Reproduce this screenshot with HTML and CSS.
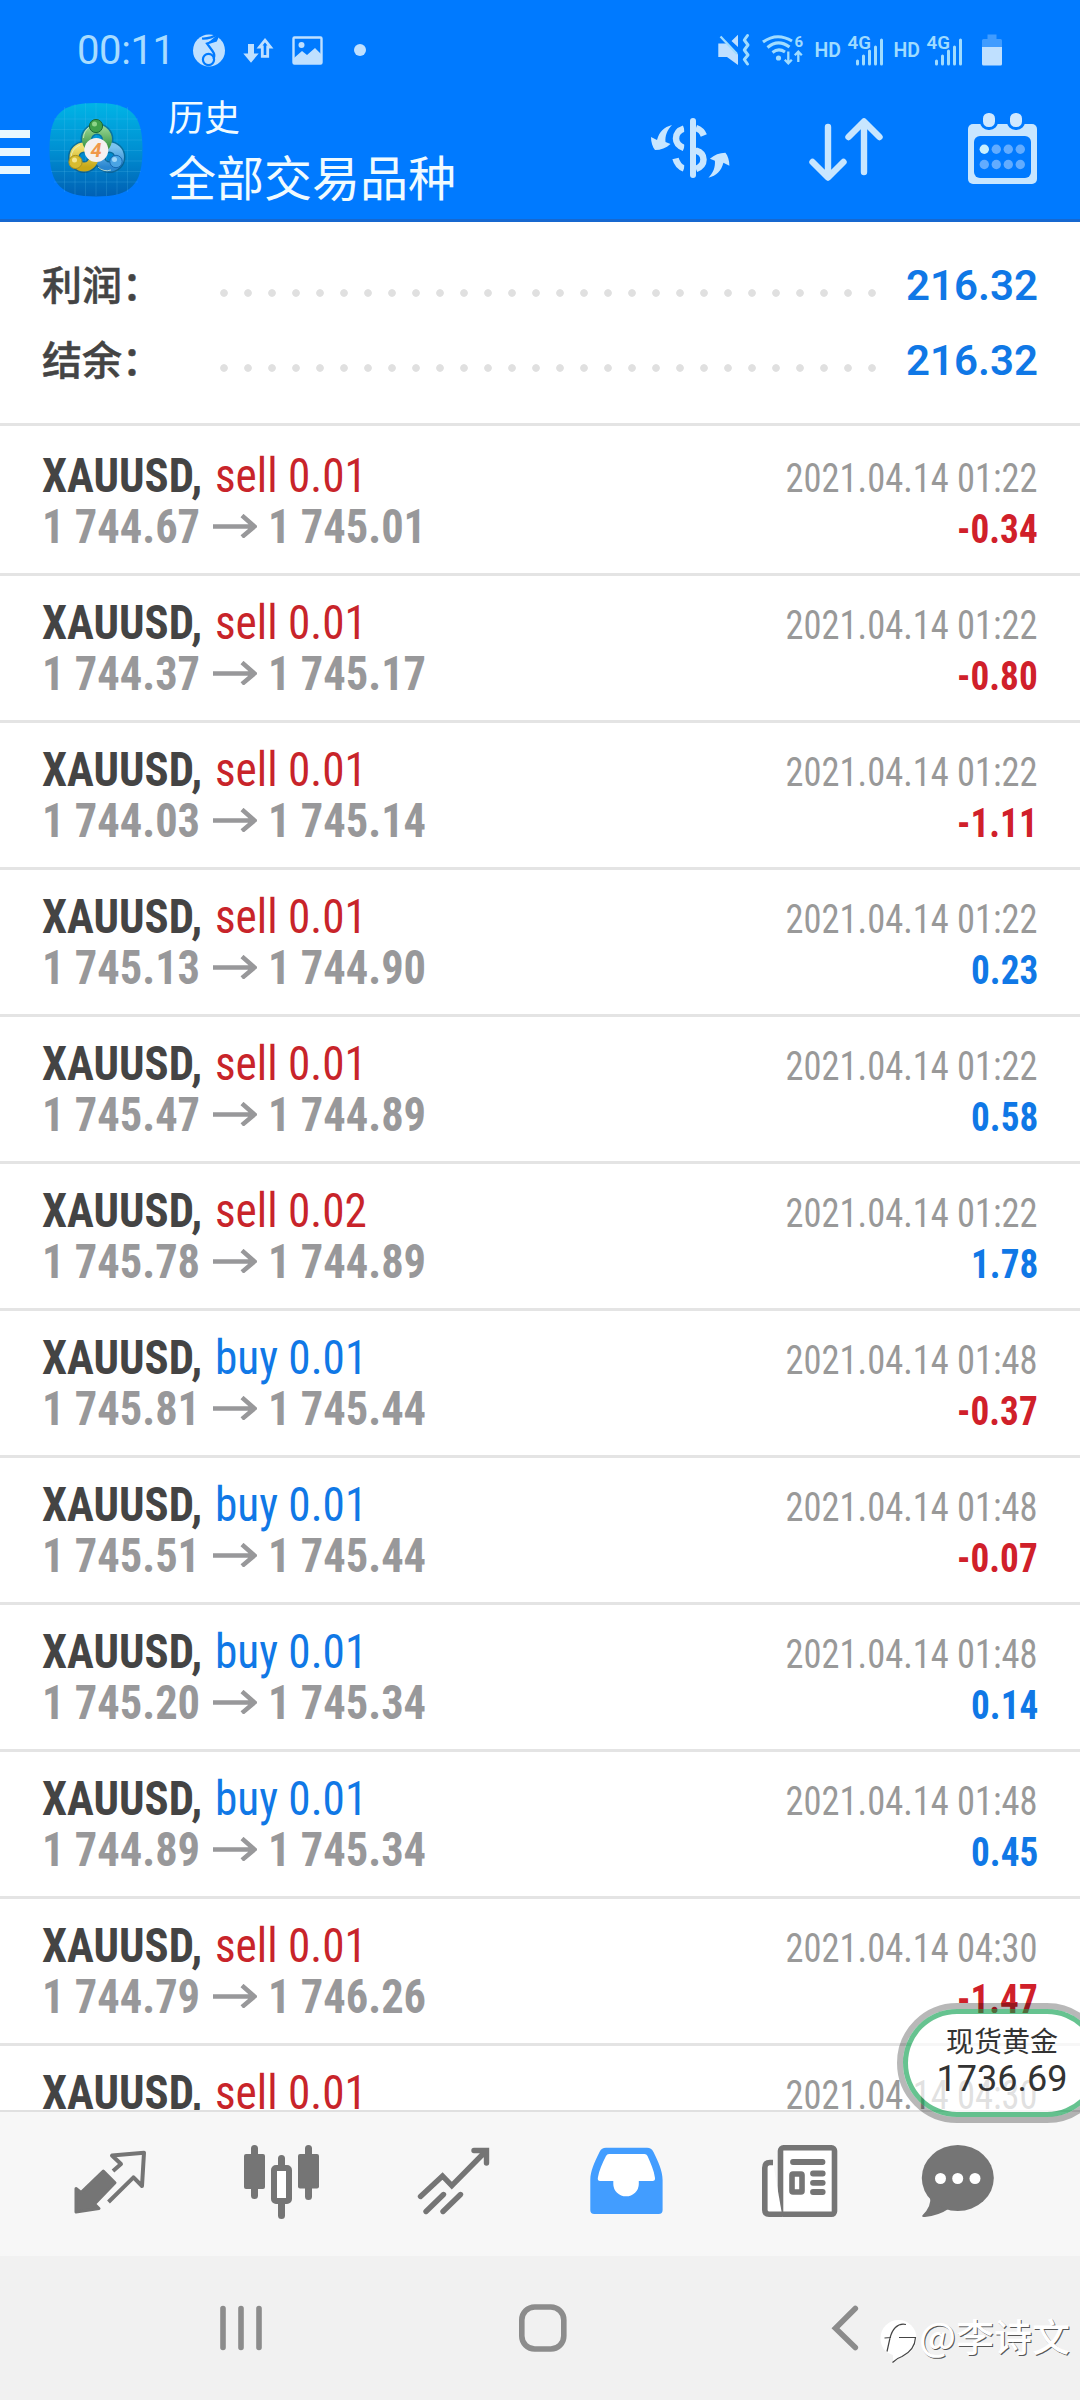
FILE: index.html
```html
<!DOCTYPE html>
<html lang="zh-CN">
<head>
<meta charset="utf-8">
<title>历史</title>
<link rel="stylesheet" href="styles.css">
</head>
<body>
<header class="header">
  <div class="status">
    <span class="clock">00:11</span>
    <svg class="status-left" viewBox="185 19 190 60" width="190" height="60">
      <circle cx="209" cy="49.5" r="16" class="pale"/>
      <path d="M202 37.500Q210 38 219 32.500L216 39.500 207 42.500 212.500 50Q215.500 54 213.500 58" class="note"/>
      <path d="M219 32.500L216 39.500 207 42.500z" class="blue"/>
      <circle cx="208.500" cy="58.500" r="5.600" class="note"/>
      <path d="M248 43h6v9.500h4.700L251 61.700 243.300 52.500H248z" class="pale"/>
      <path d="M265 39.200L270.500 46H267.700V55.400H262.300V46H259.500z" class="up-arrow"/>
      <rect x="293.5" y="36.5" width="28" height="26" rx="1" class="photo-frame"/>
      <circle cx="301.5" cy="44" r="3" class="pale"/>
      <path d="M294 57l8-7 5 4 8-7 6 6v9h-27z" class="pale"/>
      <circle cx="360" cy="49" r="6" class="pale"/>
    </svg>
    <svg class="status-right" viewBox="710 19 310 60" width="310" height="60">
      <path d="M718.3 42.5H727L738 53.5V64L727 56H718.3zM731.5 40L738 33.8V46z" class="pale"/>
      <path d="M720.5 35.5L737 53" class="thin"/>
      <path d="M747.5 34.5L744.3 39 748 44 744.3 49 748 54 744.3 58.5 747.5 63" class="squiggle"/>
      <path d="M763 41Q777 31 792 40M767.5 46.5Q778 37.5 789.5 46M772.5 51.5Q778.5 46.5 785 51" class="wave"/>
      <circle cx="778.5" cy="57" r="2.6" class="cyan"/>
      <path d="M788.3 50.5V62M784.8 58.7l3.5 3.6 3.5-3.6M798.3 61V50.5M794.8 54.2l3.5-3.6 3.5 3.6" class="thin"/>
      <text x="794.5" y="46" class="s-six">6</text>
      <text x="814.500" y="56" class="s-hd" textLength="26.500" lengthAdjust="spacingAndGlyphs">HD</text>
      <text x="847.5" y="48" class="s-4g" textLength="23.500" lengthAdjust="spacingAndGlyphs">4G</text>
      <path d="M857.5 60v3M863.5 55v8M869.5 50v13M875.5 46v17M881.5 39v24" class="bars"/>
      <text x="893.500" y="56" class="s-hd" textLength="26.500" lengthAdjust="spacingAndGlyphs">HD</text>
      <text x="926.5" y="48" class="s-4g" textLength="23.500" lengthAdjust="spacingAndGlyphs">4G</text>
      <path d="M936.5 60v3M942.5 55v8M948.5 50v13M954.5 46v17M960.5 39v24" class="bars"/>
      <path d="M987.5 33.5h9v4.500h4a1.500 1.500 0 0 1 1.500 1.500V46.500H982V39.500a1.500 1.500 0 0 1 1.500-1.500h4z" class="battery-top"/>
      <path d="M982 46h20v17a1.500 1.500 0 0 1-1.500 1.500h-17a1.500 1.500 0 0 1-1.500-1.500z" class="pale"/>
    </svg>
  </div>
  <div class="toolbar">
    <svg viewBox="0 90 36 120" width="36" height="120"><path d="M0 130h30v8H0zM0 148h30v8H0zM0 166h30v8H0z" class="menu-bars"/></svg>
    <svg viewBox="36 90 132 120" width="132" height="120">
      <defs>
        <linearGradient id="sky" x1="0" y1="0" x2="0" y2="1"><stop offset="0" stop-color="#00b4e6"/><stop offset=".5" stop-color="#0090d2"/><stop offset="1" stop-color="#0060b4"/></linearGradient>
        <linearGradient id="green" x1="0" y1="0" x2="0" y2="1"><stop offset="0" stop-color="#8fd08a"/><stop offset="1" stop-color="#2d8c3c"/></linearGradient>
        <linearGradient id="gold" x1="0" y1="0" x2="0" y2="1"><stop offset="0" stop-color="#f0e070"/><stop offset="1" stop-color="#c8a818"/></linearGradient>
        <linearGradient id="azure" x1="0" y1="0" x2="0" y2="1"><stop offset="0" stop-color="#7cc4f0"/><stop offset="1" stop-color="#2a86d0"/></linearGradient>
      </defs>
      <path d="M96 103C131 103 142.500 114 142.500 149.500S131 196.500 96 196.500 49.500 185 49.500 149.500 61 103 96 103z" fill="url(#sky)"/>
      <path d="M64.500 107v85M75 104v91M85.500 103v93M96 103v93M106.500 103v93M117 104v91M127.500 107v85M54 119h84M51 129.500h90M50 140h92M50 150.500h92M50 161h92M51 171.500h90M54 182h84" class="grid"/>
      <g fill="none" stroke="#123c50" stroke-width="12" opacity=".4"><circle cx="97" cy="139.500" r="10.500"/><circle cx="84" cy="157" r="10"/><circle cx="109.500" cy="157" r="10"/></g>
      <g fill="none" stroke-width="9"><circle cx="109.500" cy="157" r="10" stroke="url(#azure)"/><circle cx="84" cy="157" r="10" stroke="url(#gold)"/><circle cx="97" cy="139.500" r="10.500" stroke="url(#green)"/></g>
      <g fill="none" stroke="#e6f6d8" stroke-width="1" opacity=".7"><path d="M83.500 138a13.500 13.500 0 0 1 6-11M71 158a13.500 13.500 0 0 1 9-13M98 167a13 13 0 0 0 13 3"/></g>
      <circle cx="96" cy="126" r="6.600" fill="#3fa04a" stroke="#1d6a35"/><circle cx="94.500" cy="124" r="2.500" fill="#8ed488"/>
      <circle cx="75.500" cy="162" r="6.600" fill="#d8bc30" stroke="#a89020"/><circle cx="74.500" cy="160" r="2.500" fill="#f4e690"/>
      <circle cx="116" cy="161.500" r="6.200" fill="#4aa4e4" stroke="#1868b0"/><circle cx="114.500" cy="159.500" r="2.500" fill="#a0d6f8"/>
      <circle cx="96.300" cy="150" r="12" fill="#f4f0f0"/>
      <text x="96" y="157" class="logo-4">4</text>
    </svg>
    <div class="titles"><div class="title-small">历史</div><div class="title-big">全部交易品种</div></div>
    <svg class="tool tool-first" viewBox="645 90 155 120" width="155" height="120">
      <path d="M684 128.500C678 130.500 676 134 676 138.500S679 146 684 148M696 128C700.500 129.500 702.500 132 703.800 135.500M696 150.500C701 152 703.500 155 703.500 159.500S701 167 696 169M675.500 158.500C677 164 680 167 684 168.500" class="dollar"/>
      <path d="M690 145L699 149V155L690 152z" class="ice"/>
      <path d="M684.200 123h5.500v53h-5.500z" class="dollar-gap"/>
      <path d="M693 121V175" class="dollar-bar"/>
      <path d="M672 125C664 127 659 132 657 140L651 137C651 142 652.500 147 655 150C661 150 666 148 670.500 144L665.500 142C665 136 667 130 672 125z" class="ice"/>
      <path d="M672 125C664 127 659 132 657 140L651 137C651 142 652.500 147 655 150C661 150 666 148 670.500 144L665.500 142C665 136 667 130 672 125z" transform="rotate(180 690.200 151.400)" class="ice"/>
    </svg>
    <svg class="tool" viewBox="800 90 160 120" width="160" height="120"><path d="M828 127V177M812.500 162L828 177.500 843.500 162M864 172V122M848.500 137L864 121.500 879.500 137" class="sort"/></svg>
    <svg class="tool" viewBox="960 90 120 120" width="120" height="120">
      <rect x="968" y="124" width="69" height="60" rx="5" class="ice"/>
      <rect x="974" y="136" width="57" height="42" rx="6" class="blue"/>
      <rect x="981.500" y="111.500" width="15" height="17" rx="7" class="tab"/><rect x="1008.500" y="111.500" width="15" height="17" rx="7" class="tab"/>
      <circle cx="984.300" cy="149.300" r="4.700" class="day-on"/>
      <g class="day"><circle cx="996.300" cy="149.300" r="4.700"/><circle cx="1008.300" cy="149.300" r="4.700"/><circle cx="1020.300" cy="149.300" r="4.700"/><circle cx="984.300" cy="164.500" r="4.700"/><circle cx="996.300" cy="164.500" r="4.700"/><circle cx="1008.300" cy="164.500" r="4.700"/><circle cx="1020.300" cy="164.500" r="4.700"/></g>
    </svg>
  </div>
</header>

<section class="summary">
  <div class="sum-row"><span class="sum-label">利润：</span><span class="dots"></span><span class="sum-value">216.32</span></div>
  <div class="sum-row"><span class="sum-label">结余：</span><span class="dots"></span><span class="sum-value">216.32</span></div>
</section>

<svg class="defs" width="0" height="0"><symbol id="arrow" viewBox="0 0 44 24"><path d="M0 12.500H41M29 1.500L41.500 12.500 29 23"/></symbol></svg>

<main class="list">
  <div class="row"><div class="line"><b class="sym">XAUUSD,</b><span class="sell">sell 0.01</span><time>2021.04.14 01:22</time></div><div class="line prices"><b class="open">1 744.67</b><svg class="arr"><use href="#arrow"/></svg><b class="close">1 745.01</b><b class="amt neg">-0.34</b></div></div>
  <div class="row"><div class="line"><b class="sym">XAUUSD,</b><span class="sell">sell 0.01</span><time>2021.04.14 01:22</time></div><div class="line prices"><b class="open">1 744.37</b><svg class="arr"><use href="#arrow"/></svg><b class="close">1 745.17</b><b class="amt neg">-0.80</b></div></div>
  <div class="row"><div class="line"><b class="sym">XAUUSD,</b><span class="sell">sell 0.01</span><time>2021.04.14 01:22</time></div><div class="line prices"><b class="open">1 744.03</b><svg class="arr"><use href="#arrow"/></svg><b class="close">1 745.14</b><b class="amt neg">-1.11</b></div></div>
  <div class="row"><div class="line"><b class="sym">XAUUSD,</b><span class="sell">sell 0.01</span><time>2021.04.14 01:22</time></div><div class="line prices"><b class="open">1 745.13</b><svg class="arr"><use href="#arrow"/></svg><b class="close">1 744.90</b><b class="amt pos">0.23</b></div></div>
  <div class="row"><div class="line"><b class="sym">XAUUSD,</b><span class="sell">sell 0.01</span><time>2021.04.14 01:22</time></div><div class="line prices"><b class="open">1 745.47</b><svg class="arr"><use href="#arrow"/></svg><b class="close">1 744.89</b><b class="amt pos">0.58</b></div></div>
  <div class="row"><div class="line"><b class="sym">XAUUSD,</b><span class="sell">sell 0.02</span><time>2021.04.14 01:22</time></div><div class="line prices"><b class="open">1 745.78</b><svg class="arr"><use href="#arrow"/></svg><b class="close">1 744.89</b><b class="amt pos">1.78</b></div></div>
  <div class="row"><div class="line"><b class="sym">XAUUSD,</b><span class="buy">buy 0.01</span><time>2021.04.14 01:48</time></div><div class="line prices"><b class="open">1 745.81</b><svg class="arr"><use href="#arrow"/></svg><b class="close">1 745.44</b><b class="amt neg">-0.37</b></div></div>
  <div class="row"><div class="line"><b class="sym">XAUUSD,</b><span class="buy">buy 0.01</span><time>2021.04.14 01:48</time></div><div class="line prices"><b class="open">1 745.51</b><svg class="arr"><use href="#arrow"/></svg><b class="close">1 745.44</b><b class="amt neg">-0.07</b></div></div>
  <div class="row"><div class="line"><b class="sym">XAUUSD,</b><span class="buy">buy 0.01</span><time>2021.04.14 01:48</time></div><div class="line prices"><b class="open">1 745.20</b><svg class="arr"><use href="#arrow"/></svg><b class="close">1 745.34</b><b class="amt pos">0.14</b></div></div>
  <div class="row"><div class="line"><b class="sym">XAUUSD,</b><span class="buy">buy 0.01</span><time>2021.04.14 01:48</time></div><div class="line prices"><b class="open">1 744.89</b><svg class="arr"><use href="#arrow"/></svg><b class="close">1 745.34</b><b class="amt pos">0.45</b></div></div>
  <div class="row"><div class="line"><b class="sym">XAUUSD,</b><span class="sell">sell 0.01</span><time>2021.04.14 04:30</time></div><div class="line prices"><b class="open">1 744.79</b><svg class="arr"><use href="#arrow"/></svg><b class="close">1 746.26</b><b class="amt neg">-1.47</b></div></div>
  <div class="row"><div class="line"><b class="sym">XAUUSD,</b><span class="sell">sell 0.01</span><time>2021.04.14 04:30</time></div></div>
</main>

<nav class="tabs">
  <svg viewBox="0 2112 196 144"><path d="M103.300 2171L115 2182.700 94.500 2204 99 2208.500 76 2212 76 2188.500 81 2192.500z" class="solid-arrow"/><path d="M113 2171L121 2164 112 2155.500 144 2152.700 142 2186 133.500 2177.300 108.500 2202" class="line4"/></svg>
  <svg viewBox="196 2112 172 144"><path d="M254.500 2148.500v47M308.500 2148.500v48M281.500 2158.500v8M281.500 2204v11.500" class="line7"/><rect x="244" y="2154" width="21" height="35" rx="2" class="gray"/><rect x="298" y="2154" width="21" height="34.500" rx="2" class="gray"/><rect x="274" y="2168" width="15" height="33" rx="2" class="candle"/></svg>
  <svg viewBox="368 2112 172 144"><path d="M420.500 2196.500L442.500 2176 451.800 2185.700 485 2152M474 2150.500H486.500V2163M426 2211.500L443.500 2194.500M443 2211.500L460.500 2194.500" class="line5"/></svg>
  <svg viewBox="540 2112 173 144"><path d="M606 2150H647L659 2182 638 2198H614L594 2182z" fill="#fff"/><path fill-rule="evenodd" d="M606 2147.700H647C650 2147.700 652 2149 653.500 2152C658 2161 662.600 2171 662.600 2180V2210Q662.600 2214 658.600 2214H594.300Q590.300 2214 590.300 2210V2180C590.300 2171 595 2161 599.500 2152C601 2149 603 2147.700 606 2147.700zM609 2154Q607 2154 606 2156C602.500 2163 599 2170 597.800 2178Q597.500 2181 600 2181H613.300V2184A12.700 12.300 0 0 0 638.800 2184V2181H652.500Q655.300 2181 655 2178C654 2170 650.500 2163 647.500 2156Q646.500 2154 644.500 2154z" class="inbox"/></svg>
  <svg viewBox="713 2112 172 144"><rect x="780.500" y="2147.800" width="54" height="66.500" rx="3" class="line55"/><path d="M773 2162.500H770Q764.800 2162.500 764.800 2168V2210Q764.800 2214.200 769 2214.200H782" class="line55"/><path d="M793 2162H822.500M813 2173.500H822.700M813 2182.800H822.700M813 2192H822.700" class="line6"/><rect x="792" y="2174" width="10" height="18" rx="1" class="line55"/></svg>
  <svg viewBox="885 2112 195 144"><path d="M930 2196Q932 2206 922.300 2215.500Q921.500 2217.500 925 2217Q938 2216 950 2208z" class="gray"/><ellipse cx="957.800" cy="2178" rx="36" ry="33" class="gray"/><g fill="#fff"><circle cx="940.500" cy="2178.500" r="5.500"/><circle cx="957.700" cy="2178.500" r="5.500"/><circle cx="975" cy="2178.500" r="5.500"/></g></svg>
</nav>
<footer class="sysnav">
  <svg viewBox="0 2256 360 144"><path d="M223 2308.500V2347.500M241 2308.500V2347.500M259 2308.500V2347.500" class="sys"/></svg>
  <svg viewBox="360 2256 360 144"><rect x="521.800" y="2307" width="42" height="42" rx="13" class="sys"/></svg>
  <svg viewBox="720 2256 360 144"><path d="M855.300 2308.500L835.500 2328.200 855.300 2347.500" class="sys"/></svg>
</footer>

<aside class="float"><div class="float-in"><div class="float-name">现货黄金</div><div class="float-price">1736.69</div></div></aside>
<div class="mark">
  <svg viewBox="878 2316 42 50" width="42" height="50"><path d="M898.500 2320A18 18 0 0 1 916.500 2338C916 2350 908 2355 899 2357.500L893 2362.500 893 2355C884 2352 880.500 2346 880.500 2338A18 18 0 0 1 898.500 2320z" fill="#fff"/><path d="M887 2351.500L890 2338C892 2330 897 2322.500 906 2324.500M884.500 2338L891 2337.500M899 2337.500H915.500C915 2348 909 2353 902 2356.500C897 2358 895 2360 892.500 2362.500" class="mark-line"/></svg>
  <span class="mark-name">@李诗文</span>
</div>
</body>
</html>
```
FILE: styles.css
```css
* { box-sizing: border-box; }
body { margin: 0; width: 1080px; height: 2400px; position: relative; overflow: hidden; background: #fff; font-family: "Roboto Condensed", Roboto, "Noto Sans CJK SC", sans-serif; color: #444; display: flex; flex-direction: column; }
svg { display: block; flex: none; }
.defs { position: absolute; }

.header { height: 222px; background: linear-gradient(#007aff 0 219px, #1668d0 219px); flex: none; }
.status { height: 90px; padding: 9px 60px 0 77px; display: flex; align-items: center; }
.clock { font: 400 40px/60px Roboto, sans-serif; letter-spacing: -.4px; color: #a8dcff; width: 108px; padding-top: 3px; }
.status-right { margin-left: auto; }
.pale { fill: #bfe0ff; }
.cyan { fill: #a0dcff; }
.ice { fill: #c8e6ff; }
.blue { fill: #007aff; }
.note { fill: none; stroke: #007aff; stroke-width: 2.2; }
.up-arrow { fill: none; stroke: #bfe0ff; stroke-width: 2.8; }
.photo-frame { fill: none; stroke: #bfe0ff; stroke-width: 2.4; }
.thin { fill: none; stroke: #a0dcff; stroke-width: 2.3; }
.squiggle { fill: none; stroke: #a0dcff; stroke-width: 3; stroke-linejoin: round; stroke-linecap: round; }
.wave { fill: none; stroke: #a0dcff; stroke-width: 3; }
.bars { fill: none; stroke: #a0dcff; stroke-width: 3; stroke-linecap: round; }
.battery-top { fill: #409cff; }
.s-six, .s-hd, .s-4g { font-family: Roboto, sans-serif; font-weight: 600; fill: #a0dcff; }
.s-six { font-size: 15px; font-weight: 700; }
.s-hd { font-size: 20px; }
.s-4g { font-size: 18.5px; }

.toolbar { display: flex; height: 120px; }
.menu-bars { fill: #e8f8ff; }
.grid { stroke: #5cc4ee; stroke-width: 1; opacity: .2; fill: none; }
.logo-4 { font: italic 700 20px Roboto, sans-serif; fill: #f0984a; text-anchor: middle; }
.titles { font-family: "Noto Sans CJK SC", sans-serif; font-weight: 400; color: #f0fbff; white-space: nowrap; }
.title-small { font-size: 36px; line-height: 50px; }
.title-big { font-size: 48px; line-height: 70px; }
.tool-first { margin-left: auto; }
.dollar { fill: none; stroke: #c8e6ff; stroke-width: 6.5; }
.dollar-bar { fill: none; stroke: #c8e6ff; stroke-width: 6; stroke-linecap: round; }
.dollar-gap { fill: #007aff; }
.sort { fill: none; stroke: #c8e6ff; stroke-width: 6.4; stroke-linecap: round; stroke-linejoin: round; }
.tab { fill: #cfe8ff; stroke: #007aff; stroke-width: 3; }
.day-on { fill: #c8f0ff; }
.day { fill: #62acff; }

.summary { height: 204px; padding: 24px 42px 0 42px; border-bottom: 3px solid #e4e4e4; flex: none; }
.sum-row { height: 75px; line-height: 75px; display: flex; align-items: baseline; }
.sum-label { width: 170px; font: 500 40px/75px "Noto Sans CJK SC", sans-serif; -webkit-text-stroke: .5px #444; }
.dots { width: 672px; height: 75px; align-self: flex-start; background: radial-gradient(circle at 12px 47px, #e0e0e0 3.4px, transparent 4.2px) 0 0 / 24px 75px repeat-x; }
.sum-value { margin-left: auto; font: 650 42px/75px Roboto, sans-serif; color: #1078e6; }

.list { height: 1684px; overflow: hidden; flex: none; }
.row { height: 147px; padding: 21px 42px 0; border-bottom: 3px solid #e4e4e4; }
.row:first-child { height: 150px; padding-top: 24px; }
.line { display: flex; align-items: baseline; height: 51px; line-height: 51px; font-size: 48px; white-space: pre; }
.sym, .sell, .buy, .open, .close { transform-origin: 0 50%; flex: none; }
time, .amt { transform-origin: 100% 50%; flex: none; margin-left: auto; font-size: 40px; }
.sym { width: 173px; transform: scaleX(.933); }
.sell, .buy { transform: scaleX(.942); }
.sell { color: #c8242a; }
.buy { color: #1078e6; }
time { transform: scaleX(.911); color: #999; }
.prices { color: #98989a; }
.open { width: 171px; transform: scaleX(.927); }
.close { transform: scaleX(.927); }
.arr { width: 44px; height: 24px; margin: 0 11px 0 0; align-self: flex-start; position: relative; top: 13px; fill: none; stroke: #98989a; stroke-width: 4.5; }
.amt { transform: scaleX(.93); }
.neg { color: #d0202a; }
.pos { color: #1078e6; }

.tabs { height: 146px; border-top: 2px solid #e0e0e0; background: #f7f7f7; display: grid; grid-template-columns: 196px 172px 172px 173px 172px 195px; flex: none; }
.tabs svg, .sysnav svg { width: 100%; height: 144px; }
.gray { fill: #757575; }
.solid-arrow { fill: #757575; stroke: #757575; stroke-width: 3; stroke-linejoin: round; }
.line4, .line5, .line55, .line6, .line7, .candle { fill: none; stroke: #757575; }
.line4 { stroke-width: 4; stroke-linejoin: round; }
.line5 { stroke-width: 5.4; stroke-linecap: round; stroke-linejoin: miter; }
.line55 { stroke-width: 5.6; fill: #fff; }
.line6 { stroke-width: 5.8; stroke-linecap: round; }
.line7 { stroke-width: 7; stroke-linecap: round; }
.candle { stroke-width: 6; fill: #fff; }
.inbox { fill: #429dff; }
.sysnav { height: 144px; background: #f1f1f1; display: grid; grid-template-columns: 360px 360px 360px; flex: none; }
.sys { fill: none; stroke: #8c8c8c; stroke-width: 5.6; stroke-linecap: round; }

.float { position: absolute; left: 897px; top: 2003px; width: 210px; height: 120px; border: 6px solid rgba(0, 0, 0, .28); border-radius: 60px; }
.float-in { height: 108px; border: 5px solid rgba(0, 155, 70, .6); border-radius: 54px; background: rgba(255, 255, 255, .7); background-clip: padding-box; text-align: center; color: #333; }
.float-name { font: 400 28px/32px "Noto Sans CJK SC", sans-serif; margin-top: 10px; }
.float-price { font: 400 36px/47px Roboto, sans-serif; }
.mark { position: absolute; left: 878px; top: 2316px; display: flex; color: #fff; white-space: nowrap; }
.mark-name { font: 500 38px/38px "Noto Sans CJK SC", sans-serif; text-shadow: 1px 1px 0 #555; margin-left: -1px; }
.mark-line { fill: none; stroke: #444; stroke-width: 1.2; }
```
